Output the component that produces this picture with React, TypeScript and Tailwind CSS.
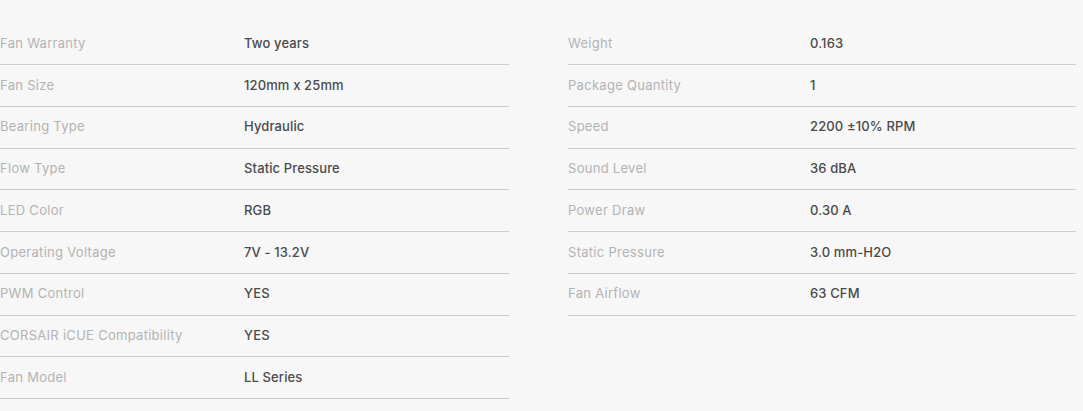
import React from "react";

const left: [string, string][] = [
  ["Fan Warranty", "Two years"],
  ["Fan Size", "120mm x 25mm"],
  ["Bearing Type", "Hydraulic"],
  ["Flow Type", "Static Pressure"],
  ["LED Color", "RGB"],
  ["Operating Voltage", "7V - 13.2V"],
  ["PWM Control", "YES"],
  ["CORSAIR iCUE Compatibility", "YES"],
  ["Fan Model", "LL Series"],
];

const right: [string, string][] = [
  ["Weight", "0.163"],
  ["Package Quantity", "1"],
  ["Speed", "2200 ±10% RPM"],
  ["Sound Level", "36 dBA"],
  ["Power Draw", "0.30 A"],
  ["Static Pressure", "3.0 mm-H2O"],
  ["Fan Airflow", "63 CFM"],
];

function SpecList({ rows, labelWidth }: { rows: [string, string][]; labelWidth: string }) {
  return (
    <div className="flex flex-col">
      {rows.map(([label, value]) => (
        <div
          key={label}
          className="flex h-[41.75px] items-center border-b border-[#cccccc]"
        >
          <div className={`${labelWidth} shrink-0 tracking-[0.022em] text-[#b3b3b3]`}>{label}</div>
          <div className="font-medium tracking-[0.01em] text-[#4a4a4a]">{value}</div>
        </div>
      ))}
    </div>
  );
}

export default function App() {
  return (
    <div
      className="h-[411px] w-[1083px] bg-[#f7f7f7] pt-[23.25px] text-[13px]"
      style={{ fontFamily: "Inter, 'Noto Sans', sans-serif" }}
    >
      <div className="grid grid-cols-[509px_508px] gap-x-[59px]">
        <SpecList rows={left} labelWidth="w-[244px]" />
        <SpecList rows={right} labelWidth="w-[242px]" />
      </div>
    </div>
  );
}
